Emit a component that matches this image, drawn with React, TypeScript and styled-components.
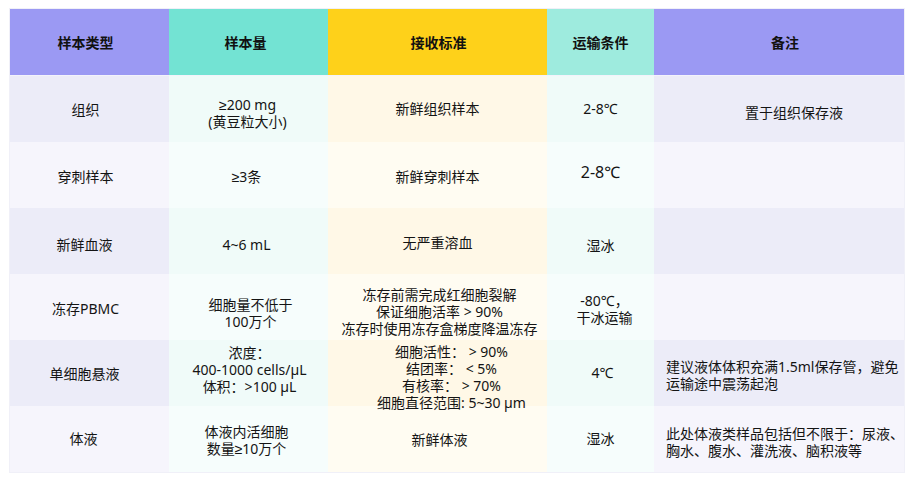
import React from 'react';
import styled, { createGlobalStyle, css } from 'styled-components';

const GlobalStyle = createGlobalStyle`
  body {
    margin: 0;
    background: #ffffff;
    font-family: "Noto Sans", "Liberation Sans", "Noto Sans CJK SC", sans-serif;
    color: #141414;
  }
`;

type Tone = 'violet' | 'mint' | 'amber' | 'aqua';

const headBg: Record<Tone, string> = {
  violet: '#9b99f3',
  mint: '#73e3d3',
  amber: '#fed11a',
  aqua: '#9eebde',
};

const bodyBg: Record<Tone, [string, string]> = {
  violet: ['#ececf8', '#f6f5fc'],
  mint: ['#f0fbf9', '#f6fdfc'],
  amber: ['#fff8e7', '#fffcf2'],
  aqua: ['#f0fbf9', '#f6fdfc'],
};

const columns: { title: string; tone: Tone; dx?: number }[] = [
  { title: '样本类型', tone: 'violet', dx: -4 },
  { title: '样本量', tone: 'mint', dx: -3 },
  { title: '接收标准', tone: 'amber', dx: 1 },
  { title: '运输条件', tone: 'aqua' },
  { title: '备注', tone: 'violet', dx: 6 },
];

type CellData = {
  lines: string[];
  dx?: number;
  dy?: number;
  size?: number;
  left?: boolean;
  raise?: boolean;
};

const c = (text: string, opts: Omit<CellData, 'lines'> = {}): CellData => ({
  lines: text ? text.split('\n') : [],
  ...opts,
});

const rows: CellData[][] = [
  [
    c('组织', { dx: -4 }),
    c('≥200 mg\n(黄豆粒大小)', { dy: 4, dx: -1 }),
    c('新鲜组织样本', { dy: -1 }),
    c('2-8℃', { dy: -1 }),
    c('置于组织保存液', { dy: 3, dx: 15 }),
  ],
  [
    c('穿刺样本', { dx: -4, dy: 1 }),
    c('≥3条', { dy: 1, dx: -2 }),
    c('新鲜穿刺样本', { dy: 1 }),
    c('2-8℃', { dy: -3, size: 16 }),
    c(''),
  ],
  [
    c('新鲜血液', { dx: -5, dy: 3 }),
    c('4~6 mL', { dy: 3, dx: -2 }),
    c('无严重溶血', { dy: 1 }),
    c('湿冰', { dy: 4 }),
    c(''),
  ],
  [
    c('冻存PBMC', { dx: -4, dy: 1 }),
    c('细胞量不低于\n100万个', { dy: 6, dx: 2 }),
    c('冻存前需完成红细胞裂解\n保证细胞活率 > 90%\n冻存时使用冻存盒梯度降温冻存', { dy: 4, dx: 2 }),
    c('-80℃，\n干冰运输', { dy: 2, dx: 4 }),
    c(''),
  ],
  [
    c('单细胞悬液', { dx: -5 }),
    c('浓度：\n400-1000 cells/µL\n体积：>100 µL', { dy: -4, dx: 1 }),
    c('细胞活性： > 90%\n结团率： < 5%\n有核率： > 70%\n细胞直径范围: 5~30 µm', {
      dy: 4,
      dx: 14,
      raise: true,
    }),
    c('4℃', { dy: -1, dx: 2 }),
    c('建议液体体积充满1.5ml保存管，避免\n运输途中震荡起泡', { dy: 2, left: true }),
  ],
  [
    c('体液', { dx: -6, dy: -1 }),
    c('体液内活细胞\n数量≥10万个', { dy: 1, dx: -2 }),
    c('新鲜体液', { dx: 2 }),
    c('湿冰', { dy: -1 }),
    c('此处体液类样品包括但不限于：尿液、\n胸水、腹水、灌洗液、脑积液等', { dy: 3, left: true }),
  ],
];

const shift = (dx = 0, dy = 0) => css`
  padding: ${Math.max(dy, 0) * 2}px ${Math.max(-dx, 0) * 2}px ${Math.max(-dy, 0) * 2}px
    ${Math.max(dx, 0) * 2}px;
`;

const Page = styled.div`
  padding: 8px 0 0 9px;
`;

const Table = styled.div`
  display: grid;
  grid-template-columns: 159px 159px 219px 107px 250px;
  grid-template-rows: 67px repeat(6, 66px);
  width: 894px;
  border: 1px solid #f0f0f8;
`;

const HeadCell = styled.div<{ $tone: Tone; $dx?: number }>`
  display: flex;
  align-items: center;
  justify-content: center;
  background: ${(p) => headBg[p.$tone]};
  border-bottom: 1px solid #f3f3fb;
  font-family: "Noto Sans CJK SC", sans-serif;
  font-size: 14px;
  font-weight: 700;
  color: #111111;
  ${(p) => shift(p.$dx, 0)}
`;

const BodyCell = styled.div<{
  $tone: Tone;
  $even: boolean;
  $dx?: number;
  $dy?: number;
  $size?: number;
  $left?: boolean;
  $raise?: boolean;
}>`
  display: flex;
  flex-direction: column;
  align-items: ${(p) => (p.$left ? 'flex-start' : 'center')};
  justify-content: center;
  background: ${(p) => bodyBg[p.$tone][p.$even ? 1 : 0]};
  font-size: ${(p) => p.$size ?? 14}px;
  line-height: 17px;
  white-space: nowrap;
  text-align: ${(p) => (p.$left ? 'left' : 'center')};
  ${(p) => shift(p.$dx, p.$dy)}
  ${(p) =>
    p.$left &&
    css`
      padding-left: 12px;
    `}
  ${(p) =>
    p.$raise &&
    css`
      position: relative;
      z-index: 1;
    `}
`;

const Line = styled.span`
  display: block;
`;

export default function App() {
  return (
    <>
      <GlobalStyle />
      <Page>
        <Table>
          {columns.map((col) => (
            <HeadCell key={col.title} $tone={col.tone} $dx={col.dx}>
              {col.title}
            </HeadCell>
          ))}
          {rows.map((row, ri) =>
            row.map((cell, ci) => (
              <BodyCell
                key={`${ri}-${ci}`}
                $tone={columns[ci].tone}
                $even={ri % 2 === 1}
                $dx={cell.dx}
                $dy={cell.dy}
                $size={cell.size}
                $left={cell.left}
                $raise={cell.raise}
              >
                {cell.lines.map((line, li) => (
                  <Line key={li}>{line}</Line>
                ))}
              </BodyCell>
            ))
          )}
        </Table>
      </Page>
    </>
  );
}
